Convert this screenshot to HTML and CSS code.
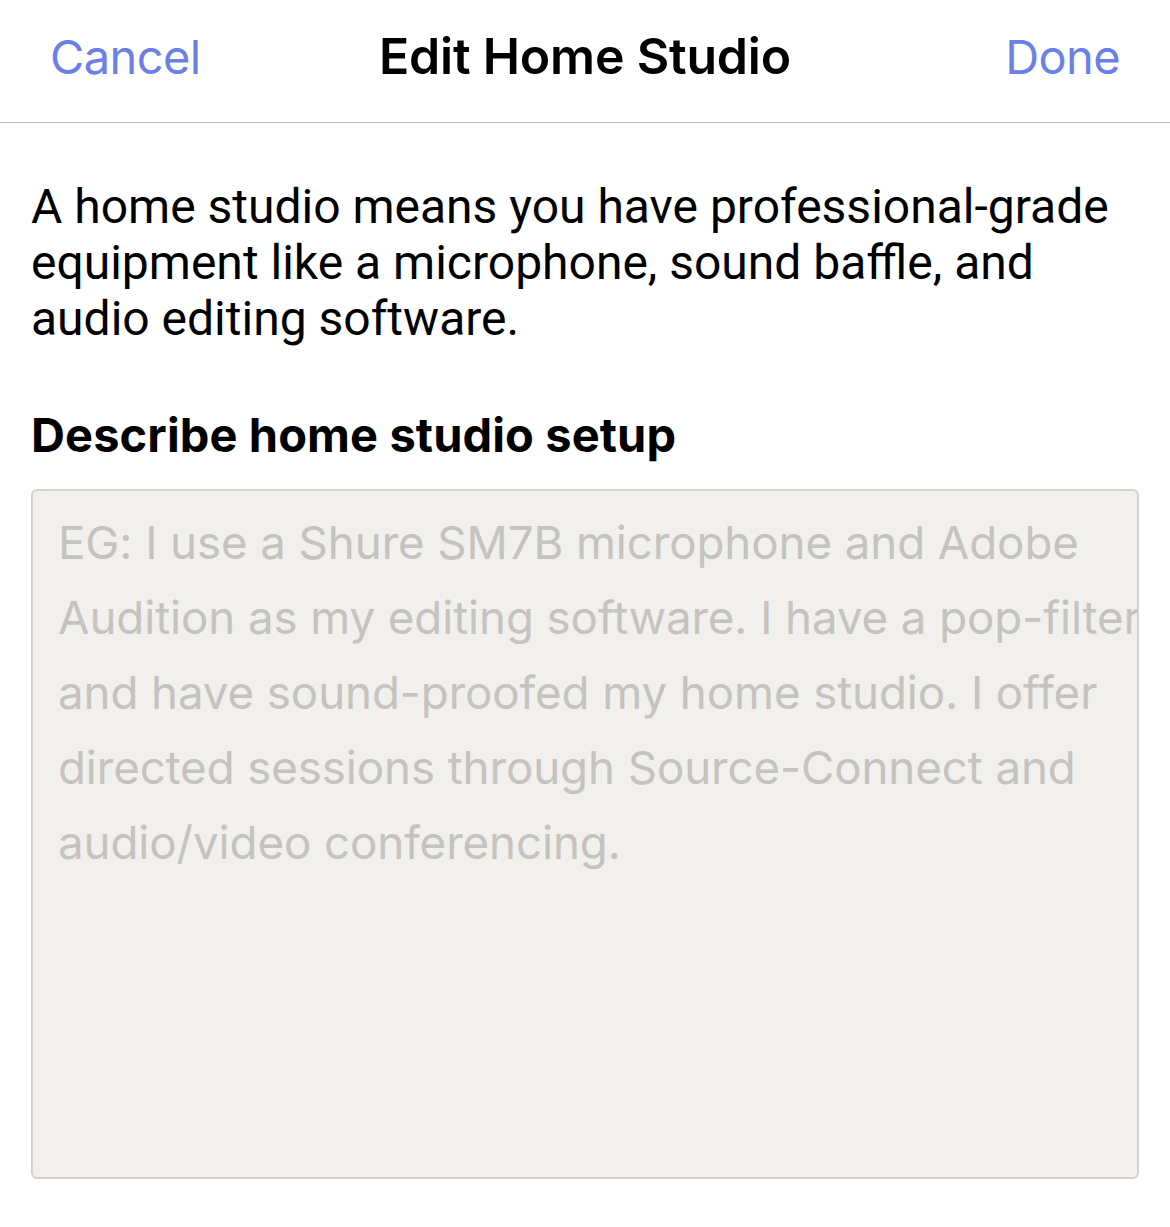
FILE: index.html
```
<!doctype html>
<html>
<head>
    <meta charset="utf-8" />
    <title>Edit Home Studio</title>
    <link rel="stylesheet" href="styles.css">
</head>
<body>
    <div class="navbar">
        <a href="#" class="nav-btn">Cancel</a>
        <h1 class="nav-title">Edit Home Studio</h1>
        <a href="#" class="nav-btn nav-right">Done</a>
    </div>
    <div class="content">
        <p class="intro">A home studio means you have professional-grade equipment like a microphone, sound baffle, and audio editing software.</p>
        <h2 class="label">Describe home studio setup</h2>
        <div class="textarea">
            <div class="placeholder">EG: I use a Shure SM7B microphone and Adobe<br>Audition as my editing software. I have a pop-filter<br>and have sound-proofed my home studio. I offer<br>directed sessions through Source-Connect and<br>audio/video conferencing.</div>
        </div>
    </div>
</body>
</html>
```
FILE: styles.css
```
body{
    margin:0;
    background:#fff;
    font-family:Inter, "Noto Sans", sans-serif;
    color:#000;
}
.navbar{
    height:123px;
    display:grid;
    grid-template-columns:1fr auto 1fr;
    align-items:center;
    padding:0 50px 10px 50px;
    border-bottom:1px solid #bdbdbd;
    box-sizing:border-box;
}
.nav-btn{
    color:#6b80e6;
    text-decoration:none;
    font-size:47px;
    letter-spacing:-0.6px;
}
.nav-right{
    justify-self:end;
}
.nav-title{
    margin:0;
    font-size:50px;
    font-weight:600;
    letter-spacing:-0.2px;
}
.content{
    padding:0 31px;
}
.intro{
    margin:0;
    padding-top:56px;
    font-family:Roboto, sans-serif;
    font-size:48px;
    line-height:56px;
}
.label{
    margin:60px 0 0 0;
    font-family:Inter, sans-serif;
    font-size:47px;
    font-weight:700;
    line-height:56px;
    letter-spacing:0.1px;
}
.textarea{
    margin-top:26px;
    height:690px;
    box-sizing:border-box;
    background:#f1f0ec;
    border:2px solid #d2d1cd;
    border-radius:6px;
    overflow:hidden;
    padding:14px 0 0 25px;
}
.placeholder{
    white-space:nowrap;
    color:#c4c3bf;
    font-size:45.7px;
    line-height:75px;
    letter-spacing:-0.1px;
}
```
